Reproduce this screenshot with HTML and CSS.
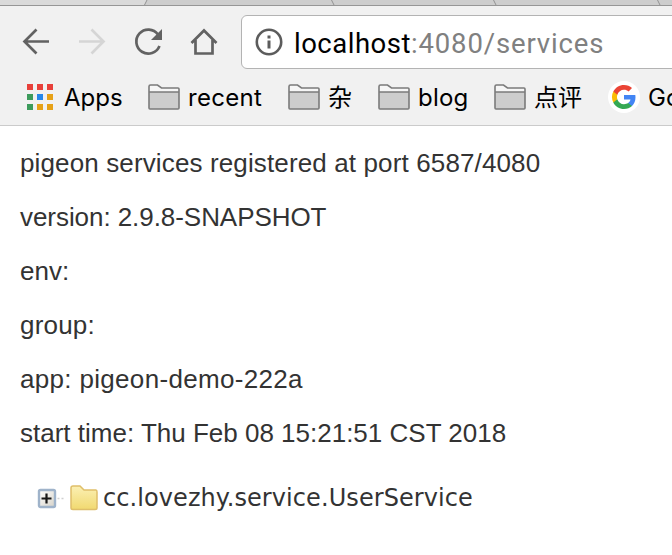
FILE: index.html
```html
<!DOCTYPE html>
<html lang="en">
<head>
<meta charset="utf-8">
<title>localhost:4080/services</title>
<link rel="stylesheet" href="styles.css">
</head>
<body>
<svg width="0" height="0" class="defs" aria-hidden="true">
  <symbol id="folder" viewBox="0 0 32 26">
    <path d="M1 24V2.500Q1 1 2.500 1H9.500L13.500 4H30Q31 4 31 5V24Q31 25 30 25H2Q1 25 1 24Z" fill="#f6f6f6"/>
    <path d="M1 8H31V25H1Z" fill="#cdcdcd"/>
    <path d="M1 24V2.500Q1 1 2.500 1H9.500L13.500 4H30Q31 4 31 5V24Q31 25 30 25H2Q1 25 1 24ZM1 8H31" fill="none" stroke="#7b7b7b" stroke-width="1.600"/>
  </symbol>
</svg>
<header class="chrome">
  <svg class="tabs" width="672" height="6" viewBox="0 0 672 6">
    <path d="M0 0H147L144.500 5H0Z" fill="#dadada"/>
    <path d="M147 0L144.500 5M331.500 0L334 5M493.500 0L496 5M657.500 0L660 5" fill="none" stroke="#929292"/>
    <path d="M0 5.500H672" stroke="#969696"/>
  </svg>
  <nav class="toolbar">
    <svg class="nav-icons" width="241" height="54" viewBox="0 15 241 54" fill="none" stroke="#626262" stroke-width="2.700">
      <path d="M49 41.500H25M36.500 29.500L24.500 41.500L36.500 53.500"/>
      <path d="M79 41.500H103M91.500 29.500L103.500 41.500L91.500 53.500" stroke="#d5d5d5"/>
      <path d="M158 34.500A12 12 0 1 0 159.500 46"/>
      <path d="M162 29V40H151Z" fill="#626262" stroke="none"/>
      <path d="M191.500 43L204 30.500L216.500 43M195.500 40V53.500H212.500V40"/>
    </svg>
    <div class="address">
      <svg width="28" height="28" viewBox="0 0 28 28"><circle cx="14" cy="14" r="12.200" fill="none" stroke="#5c5c5c" stroke-width="2.600"/><path d="M12.500 7.500H15.500V10.500H12.500ZM12.500 12.500H15.500V20.500H12.500Z" fill="#5c5c5c"/></svg>
      <span class="url"><b>localhost</b>:4080/services</span>
    </div>
  </nav>
  <nav class="bookmarks">
    <a class="mark apps">
      <svg width="26" height="26" viewBox="0 0 26 26"><path d="M0 0H6V6H0ZM10 0H16V6H10ZM20 0H26V6H20Z" fill="#e8403a"/><path d="M0 10H6V16H0ZM0 20H6V26H0Z" fill="#3c9b5c"/><path d="M10 10H16V16H10Z" fill="#2687ea"/><path d="M20 10H26V16H20ZM10 20H16V26H10ZM20 20H26V26H20Z" fill="#e6a117"/></svg>
      <span>Apps</span>
    </a>
    <a class="mark recent"><svg width="32" height="26"><use href="#folder"/></svg><span>recent</span></a>
    <a class="mark misc"><svg width="32" height="26"><use href="#folder"/></svg><span>杂</span></a>
    <a class="mark blog"><svg width="32" height="26"><use href="#folder"/></svg><span>blog</span></a>
    <a class="mark review"><svg width="32" height="26"><use href="#folder"/></svg><span>点评</span></a>
    <a class="mark google">
      <svg width="32" height="32" viewBox="0 0 32 32"><circle cx="16" cy="16" r="16" fill="#fff"/><g transform="translate(4 4)"><path d="M23.500 12.300c0-.8-.1-1.600-.2-2.400H12v4.600h6.500c-.3 1.500-1.100 2.700-2.400 3.600v3h3.900c2.200-2.100 3.500-5.100 3.500-8.800z" fill="#4285f4"/><path d="M12 24c3.200 0 6-1.100 8-2.900l-3.900-3c-1.100.7-2.400 1.200-4.100 1.200-3.100 0-5.800-2.100-6.700-5H1.300v3.100C3.300 21.300 7.300 24 12 24z" fill="#34a853"/><path d="M5.300 14.300a7.200 7.200 0 0 1 0-4.600V6.600h-4a12 12 0 0 0 0 10.800z" fill="#fbbc05"/><path d="M12 4.700c1.800 0 3.300.6 4.600 1.800L20 3.100C18 1.200 15.200 0 12 0 7.300 0 3.300 2.700 1.300 6.600l4 3.100c.9-2.900 3.600-5 6.700-5z" fill="#ea4335"/></g></svg>
      <span>Go</span>
    </a>
  </nav>
</header>
<main>
  <p class="registered">pigeon services registered at port 6587/4080</p>
  <p class="version">version: 2.9.8-SNAPSHOT</p>
  <p>env:</p>
  <p class="group">group:</p>
  <p class="app">app: pigeon-demo-222a</p>
  <p>start time: Thu Feb 08 15:21:51 CST 2018</p>
  <div class="tree">
    <svg width="66" height="28" viewBox="0 0 66 28">
      <defs>
        <linearGradient id="box" x2="1" y2="1"><stop stop-color="#fff"/><stop offset="1" stop-color="#d6d2c8"/></linearGradient>
        <linearGradient id="yellow" x2="0" y2="1"><stop stop-color="#fbf0b4"/><stop offset="1" stop-color="#f1d970"/></linearGradient>
      </defs>
      <rect x="2" y="6" width="16" height="17" rx="1.500" fill="url(#box)" stroke="#9fb3ca" stroke-width="2.400"/>
      <path d="M4.500 14.500H14.500M9.500 9.500V19.500" stroke="#171717" stroke-width="2.200"/>
      <path d="M20.500 14.500H22.500M24.500 14.500H26.500" stroke="#d0d0d0" stroke-width="1.500"/>
      <path d="M34 24V4Q34 2 36 2H43L47 6H59Q60 6 60 8V24Q60 25.500 58 25.500H36Q34 25.500 34 24Z" fill="url(#yellow)" stroke="#dfbf6a" stroke-width="1.500"/>
    </svg>
    <span>cc.lovezhy.service.UserService</span>
  </div>
</main>
</body>
</html>
```
FILE: styles.css
```css
* { box-sizing: border-box; }
body { margin: 0; background: #fff; overflow: hidden; }
.defs { position: absolute; }
svg { display: block; flex: none; }
.chrome { width: 672px; height: 126px; background: #f1f1f1; border-bottom: 1px solid #cbcbcb; overflow: hidden; }
.tabs { background: #cdcdcd; height: 6px; }
.toolbar { display: flex; height: 63px; padding-top: 9px; }
.address { display: flex; align-items: center; width: 460px; flex: none; height: 54px; border: 1px solid #b3b3b3; border-radius: 6px; background: #fff; padding-left: 13px; }
.url { margin: 3px 0 0 11px; font: 27.500px/36px Roboto, sans-serif; letter-spacing: .86px; color: #808080; white-space: nowrap; }
.url b { font-weight: 400; letter-spacing: .5px; color: #000; }
.bookmarks { display: flex; align-items: center; height: 56px; padding-left: 27px; }
.mark { display: flex; align-items: center; flex: none; gap: 8px; font: 24px/32px Inter, "Noto Sans CJK SC", sans-serif; color: #000; white-space: nowrap; }
.mark span { padding-top: 1px; }
.apps { width: 121px; gap: 11px; }
.recent { width: 140px; letter-spacing: .3px; }
.misc { width: 90px; }
.blog { width: 116px; letter-spacing: .2px; }
.review { width: 114px; }
.google { gap: 8px; }
main { padding: 10px 20px 0; }
p { margin: 0; height: 54px; font: 26px/54px "Liberation Sans", Arial, sans-serif; color: #333; white-space: nowrap; }
.registered { letter-spacing: .13px; }
.version { letter-spacing: -.06px; }
.group { letter-spacing: .2px; }
.app { letter-spacing: .32px; }
.tree { display: flex; align-items: center; height: 54px; margin: 11px 0 0 17px; font: 24px/40px "DejaVu Sans", sans-serif; letter-spacing: .08px; color: #333; white-space: nowrap; }
```
